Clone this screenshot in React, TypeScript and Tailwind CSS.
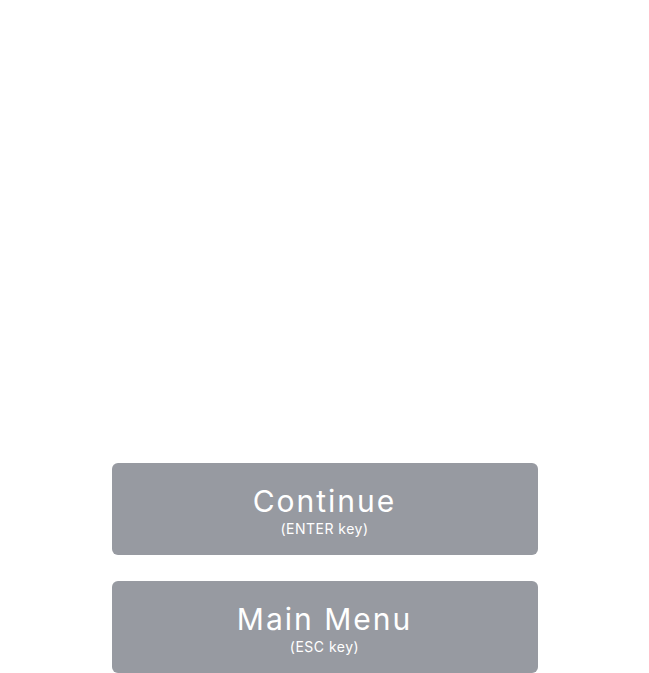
export default function App() {
  const buttons = [
    { label: "Continue", hint: "(ENTER key)" },
    { label: "Main Menu", hint: "(ESC key)" },
  ];

  return (
    <div className="min-h-screen bg-white pt-[463px] font-[Inter]">
      <div className="mx-auto flex w-[426px] flex-col gap-[26px]">
        {buttons.map((b) => (
          <button
            key={b.label}
            className="flex h-[92px] flex-col items-center justify-center rounded-md bg-[#979aa1] pt-[4px] font-[Inter] text-white"
          >
            <span className="text-3xl leading-9 tracking-[2px]">{b.label}</span>
            <span className="text-sm leading-5 tracking-[0.5px]">{b.hint}</span>
          </button>
        ))}
      </div>
    </div>
  );
}
